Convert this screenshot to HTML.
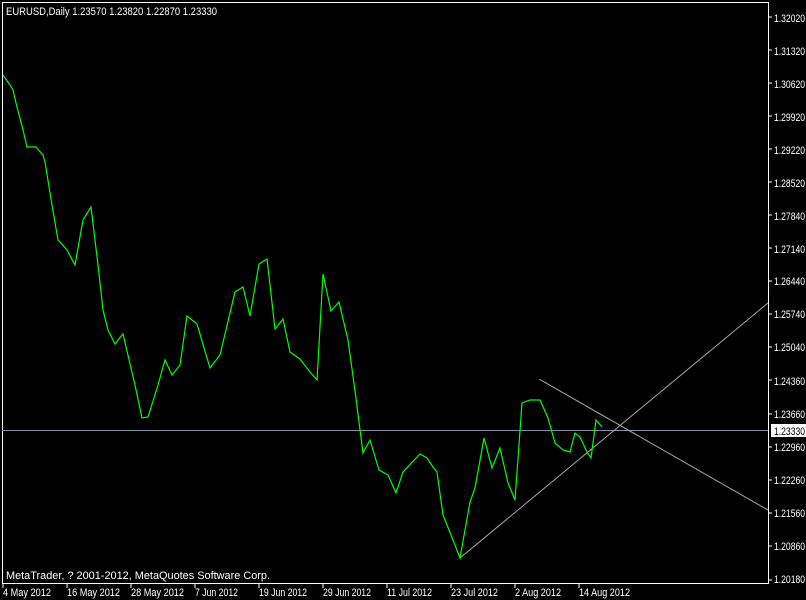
<!DOCTYPE html>
<html><head><style>
body{margin:0;background:#000;width:806px;height:600px;overflow:hidden;font-family:"Liberation Sans","DejaVu Sans",sans-serif;font-size:11px;color:#fff}
svg{position:absolute;left:0;top:0}
</style></head><body>
<svg width="806" height="600" xmlns="http://www.w3.org/2000/svg" font-family="Liberation Sans, DejaVu Sans, sans-serif" font-size="11">
<rect x="0" y="0" width="806" height="600" fill="#000"/>
<rect x="2.5" y="2.5" width="766" height="581" fill="none" stroke="#fff" stroke-width="1"/>
<line x1="2" y1="430.5" x2="768" y2="430.5" stroke="#8090a8" stroke-width="1"/>
<line x1="460" y1="558" x2="768" y2="303" stroke="#a8a8a8" stroke-width="1"/>
<line x1="539" y1="379" x2="768" y2="510" stroke="#a8a8a8" stroke-width="1"/>
<polyline fill="none" stroke="#00ff00" stroke-width="1.2" points="3,75 10,85 13,90 16,103 23,130 27,147 36,147 43,155 45,162 52,205 58,240 60,242 67,250 75,265 83,220 91,207 98,265 103,310 108,330 115,344 123,334 135,385 142,418 148,417 158,385 165,360 172,375 180,365 187,316 197,324 210,368 220,355 235,292 243,287 250,316 259,264 267,259 275,329 283,319 290,352 300,359 310,372 317,380 323,274 331,311 339,302 348,340 356,398 360,430 363,453 370,440 379,470 388,475 396,493 403,472 420,454 427,458 433,467 437,472 443,515 455,545 460,558 470,502 475,488 484,438 492,468 500,448 508,483 515,500 522,403 530,400 540,400 548,418 555,443 563,450 570,452 575,433 580,437 587,452 591,458 596,420 602,427"/>
<text x="6" y="15" fill="#fff" textLength="211" lengthAdjust="spacingAndGlyphs">EURUSD,Daily  1.23570 1.23820 1.22870 1.23330</text>
<text x="6" y="579" fill="#fff" textLength="264" lengthAdjust="spacingAndGlyphs">MetaTrader, ? 2001-2012, MetaQuotes Software Corp.</text>
<g fill="#fff">
<text x="774" y="22" textLength="31" lengthAdjust="spacingAndGlyphs">1.32020</text><text x="774" y="55" textLength="31" lengthAdjust="spacingAndGlyphs">1.31320</text><text x="774" y="88" textLength="31" lengthAdjust="spacingAndGlyphs">1.30620</text><text x="774" y="121" textLength="31" lengthAdjust="spacingAndGlyphs">1.29920</text><text x="774" y="154" textLength="31" lengthAdjust="spacingAndGlyphs">1.29220</text><text x="774" y="187" textLength="31" lengthAdjust="spacingAndGlyphs">1.28520</text><text x="774" y="220" textLength="31" lengthAdjust="spacingAndGlyphs">1.27840</text><text x="774" y="253" textLength="31" lengthAdjust="spacingAndGlyphs">1.27140</text><text x="774" y="285" textLength="31" lengthAdjust="spacingAndGlyphs">1.26440</text><text x="774" y="318" textLength="31" lengthAdjust="spacingAndGlyphs">1.25740</text><text x="774" y="351" textLength="31" lengthAdjust="spacingAndGlyphs">1.25040</text><text x="774" y="385" textLength="31" lengthAdjust="spacingAndGlyphs">1.24360</text><text x="774" y="418" textLength="31" lengthAdjust="spacingAndGlyphs">1.23660</text><text x="774" y="451" textLength="31" lengthAdjust="spacingAndGlyphs">1.22960</text><text x="774" y="484" textLength="31" lengthAdjust="spacingAndGlyphs">1.22260</text><text x="774" y="517" textLength="31" lengthAdjust="spacingAndGlyphs">1.21560</text><text x="774" y="550" textLength="31" lengthAdjust="spacingAndGlyphs">1.20860</text><text x="774" y="583" textLength="31" lengthAdjust="spacingAndGlyphs">1.20180</text>
</g>
<g stroke="#fff"><line x1="769" y1="17" x2="772" y2="17"/><line x1="769" y1="50" x2="772" y2="50"/><line x1="769" y1="83" x2="772" y2="83"/><line x1="769" y1="116" x2="772" y2="116"/><line x1="769" y1="149" x2="772" y2="149"/><line x1="769" y1="182" x2="772" y2="182"/><line x1="769" y1="215" x2="772" y2="215"/><line x1="769" y1="248" x2="772" y2="248"/><line x1="769" y1="281" x2="772" y2="281"/><line x1="769" y1="314" x2="772" y2="314"/><line x1="769" y1="347" x2="772" y2="347"/><line x1="769" y1="380" x2="772" y2="380"/><line x1="769" y1="414" x2="772" y2="414"/><line x1="769" y1="447" x2="772" y2="447"/><line x1="769" y1="480" x2="772" y2="480"/><line x1="769" y1="513" x2="772" y2="513"/><line x1="769" y1="546" x2="772" y2="546"/><line x1="769" y1="580" x2="772" y2="580"/></g>
<rect x="771" y="424" width="35" height="13" fill="#fff"/>
<text x="774" y="435" fill="#000" textLength="31" lengthAdjust="spacingAndGlyphs">1.23330</text>
<g stroke="#fff"><line x1="3" y1="584" x2="3" y2="588"/><line x1="67" y1="584" x2="67" y2="588"/><line x1="131" y1="584" x2="131" y2="588"/><line x1="195" y1="584" x2="195" y2="588"/><line x1="259" y1="584" x2="259" y2="588"/><line x1="323" y1="584" x2="323" y2="588"/><line x1="387" y1="584" x2="387" y2="588"/><line x1="451" y1="584" x2="451" y2="588"/><line x1="515" y1="584" x2="515" y2="588"/><line x1="579" y1="584" x2="579" y2="588"/></g>
<g fill="#fff">
<text x="3" y="596" textLength="48" lengthAdjust="spacingAndGlyphs">4 May 2012</text><text x="67" y="596" textLength="53" lengthAdjust="spacingAndGlyphs">16 May 2012</text><text x="131" y="596" textLength="53" lengthAdjust="spacingAndGlyphs">28 May 2012</text><text x="195" y="596" textLength="43" lengthAdjust="spacingAndGlyphs">7 Jun 2012</text><text x="259" y="596" textLength="48" lengthAdjust="spacingAndGlyphs">19 Jun 2012</text><text x="323" y="596" textLength="48" lengthAdjust="spacingAndGlyphs">29 Jun 2012</text><text x="387" y="596" textLength="45" lengthAdjust="spacingAndGlyphs">11 Jul 2012</text><text x="451" y="596" textLength="47" lengthAdjust="spacingAndGlyphs">23 Jul 2012</text><text x="515" y="596" textLength="46" lengthAdjust="spacingAndGlyphs">2 Aug 2012</text><text x="579" y="596" textLength="51" lengthAdjust="spacingAndGlyphs">14 Aug 2012</text>
</g>
</svg>
</body></html>
